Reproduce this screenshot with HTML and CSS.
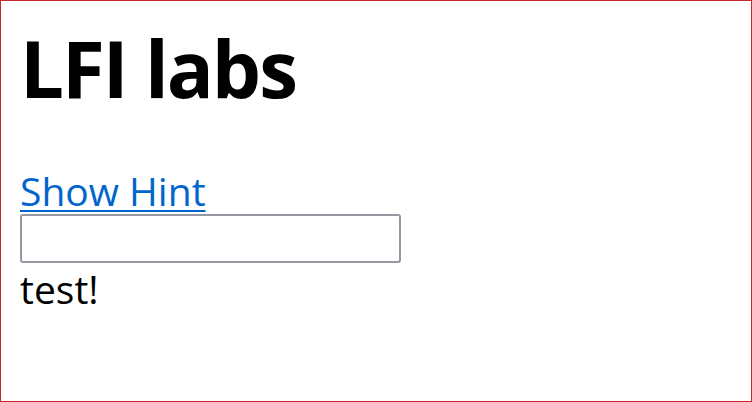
FILE: index.html
```html
<!DOCTYPE html>
<html>
<head>
<meta charset="utf-8">
<title>LFI labs</title>
<link rel="stylesheet" href="styles.css">
</head>
<body>
<div class="frame">
  <h1 class="title">LFI labs</h1>
  <a class="hint" href="#">Show Hint</a>
  <input class="field" type="text">
  <div class="out">test!</div>
</div>
</body>
</html>
```

FILE: styles.css
```css
html, body {
  margin: 0;
  padding: 0;
  background: #ffffff;
}
.frame {
  box-sizing: border-box;
  width: 752px;
  height: 402px;
  border: 1px solid #c8282b;
  padding: 0 0 0 19px;
  display: flex;
  flex-direction: column;
  align-items: flex-start;
  font-family: "Open Sans", "Noto Sans", sans-serif;
  color: #000;
}
.title {
  margin: 17px 0 0 0;
  font-size: 78px;
  font-weight: 700;
  line-height: 100px;
  letter-spacing: -2px;
}
.hint {
  margin-top: 51px;
  font-size: 39px;
  line-height: 44px;
  color: #0066cc;
  text-decoration: underline;
  text-decoration-thickness: 2px;
  text-underline-offset: 4px;
}
.field {
  box-sizing: border-box;
  margin: 1px 0 0 0;
  width: 381px;
  height: 49px;
  border: 2px solid #97979f;
  border-radius: 3px;
  background: #fff;
  padding: 0;
}
.out {
  margin-top: 2px;
  font-size: 39px;
  line-height: 48px;
}
```
